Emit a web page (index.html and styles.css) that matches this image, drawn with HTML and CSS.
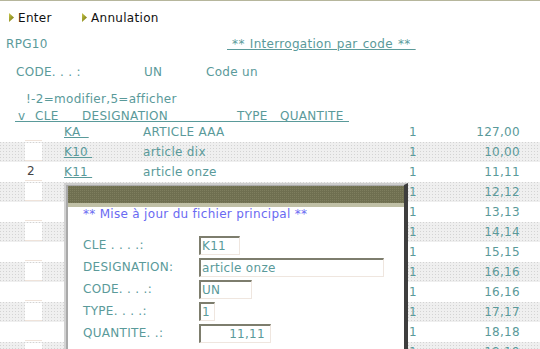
FILE: index.html
```html
<!DOCTYPE html>
<html lang="fr">
<head>
  <meta charset="UTF-8" />
  <title>RPG10 - Interrogation par code</title>
  <link rel="stylesheet" href="styles.css">
</head>
<body>
  <svg width="0" height="0" class="defs">
    <defs>
      <linearGradient id="fk" x1="0" y1="0" x2="1" y2="1">
        <stop offset="0" stop-color="#c8c84a"/>
        <stop offset="1" stop-color="#6f6f0c"/>
      </linearGradient>
    </defs>
  </svg>

  <div class="page">
    <div class="toolbar">
      <span class="fkey"><svg class="arrow" width="5" height="9"><polygon points="0,0 5,4.5 0,9" fill="url(#fk)"/></svg>Enter</span>
      <span class="fkey"><svg class="arrow" width="5" height="9"><polygon points="0,0 5,4.5 0,9" fill="url(#fk)"/></svg>Annulation</span>
    </div>

    <div class="line line-id">
      <span class="pgm">RPG10</span>
      <span class="title">&nbsp;** Interrogation par code **&nbsp;</span>
    </div>

    <div class="line line-code">
      <span class="lbl">CODE. . . :</span>
      <span class="val">UN</span>
      <span>Code un</span>
    </div>

    <div class="hint">!-2=modifier,5=afficher</div>

    <div class="cols-wrap">
      <div class="cols">
        <span class="h-v">v</span>
        <span class="h-cle">CLE</span>
        <span class="h-des">DESIGNATION</span>
        <span class="h-typ">TYPE</span>
        <span>QUANTITE</span>
      </div>
    </div>

    <!-- rows 4 and below sit under the update window, only TYPE / QUANTITE show -->
    <div class="list">
      <div class="row"><span class="sel"><span class="box"></span></span><span class="cle"><a href="#">KA&nbsp;&nbsp;</a></span><span class="des">ARTICLE AAA</span><span class="typ">1</span><span class="qty">127,00</span></div>
      <div class="row alt"><span class="sel"><span class="box"></span></span><span class="cle"><a href="#">K10&nbsp;</a></span><span class="des">article dix</span><span class="typ">1</span><span class="qty">10,00</span></div>
      <div class="row"><span class="sel"><span class="box">2</span></span><span class="cle"><a href="#">K11&nbsp;</a></span><span class="des">article onze</span><span class="typ">1</span><span class="qty">11,11</span></div>
      <div class="row alt"><span class="sel"><span class="box"></span></span><span class="cle"></span><span class="des"></span><span class="typ">1</span><span class="qty">12,12</span></div>
      <div class="row"><span class="sel"><span class="box"></span></span><span class="cle"></span><span class="des"></span><span class="typ">1</span><span class="qty">13,13</span></div>
      <div class="row alt"><span class="sel"><span class="box"></span></span><span class="cle"></span><span class="des"></span><span class="typ">1</span><span class="qty">14,14</span></div>
      <div class="row"><span class="sel"><span class="box"></span></span><span class="cle"></span><span class="des"></span><span class="typ">1</span><span class="qty">15,15</span></div>
      <div class="row alt"><span class="sel"><span class="box"></span></span><span class="cle"></span><span class="des"></span><span class="typ">1</span><span class="qty">16,16</span></div>
      <div class="row"><span class="sel"><span class="box"></span></span><span class="cle"></span><span class="des"></span><span class="typ">1</span><span class="qty">16,16</span></div>
      <div class="row alt"><span class="sel"><span class="box"></span></span><span class="cle"></span><span class="des"></span><span class="typ">1</span><span class="qty">17,17</span></div>
      <div class="row"><span class="sel"><span class="box"></span></span><span class="cle"></span><span class="des"></span><span class="typ">1</span><span class="qty">18,18</span></div>
      <div class="row alt"><span class="sel"><span class="box"></span></span><span class="cle"></span><span class="des"></span><span class="typ">1</span><span class="qty">19,19</span></div>
    </div>
  </div>

  <div class="dialog">
    <div class="dialog-in">
      <div class="dlg-bar"></div>
      <div class="dlg-body">
        <div class="dlg-title">** Mise à jour du fichier principal **</div>
        <div class="form">
          <label>CLE . . . .:</label>
          <input class="f-cle" value="K11" readonly>
          <label>DESIGNATION:</label>
          <input class="f-des" value="article onze" readonly>
          <label>CODE. . . .:</label>
          <input class="f-code" value="UN" readonly>
          <label>TYPE. . . .:</label>
          <input class="f-typ" value="1" readonly>
          <label>QUANTITE. .:</label>
          <input class="f-qty" value="11,11" readonly>
        </div>
      </div>
    </div>
  </div>
</body>
</html>
```

FILE: styles.css
```css
* {
  box-sizing: border-box;
  margin: 0;
  padding: 0;
}

body {
  font-family: "DejaVu Sans", Verdana, sans-serif;
  font-size: 12px;
  letter-spacing: 0.3px;
  color: #5a9a9a;
  background: #fff;
  position: relative;
  height: 349px;
  overflow: hidden;
}

.defs {
  position: absolute;
}

.page {
  border-top: 1px solid #b6b69c;
}

.toolbar {
  height: 33px;
  display: flex;
  align-items: center;
  padding-left: 9px;
  color: #111;
}

.fkey {
  display: inline-flex;
  align-items: center;
  gap: 4px;
}

.fkey:first-child {
  width: 73px;
}

.arrow {
  display: block;
}

.line {
  height: 20px;
  line-height: 20px;
  display: flex;
  white-space: pre;
}

.line-id .pgm {
  width: 227px;
  padding-left: 6px;
}

.title {
  text-decoration: underline;
  word-spacing: 1px;
}

.line-code {
  margin-top: 8px;
}

.line-code .lbl {
  width: 144px;
  padding-left: 16px;
}

.line-code .val {
  width: 62px;
}

.hint {
  margin-top: 10px;
  height: 14px;
  line-height: 14px;
  padding-left: 26px;
}

.cols-wrap {
  height: 16px;
  padding: 3px 0 0 15px;
}

.cols {
  display: inline-flex;
  line-height: 10px;
  border-bottom: 1px solid #5a9a9a;
  padding: 0 5px 0 3px;
}

.h-v { width: 17px; }
.h-cle { width: 47px; }
.h-des { width: 155px; }
.h-typ { width: 43px; }

.row {
  display: flex;
  height: 20px;
  line-height: 20px;
  white-space: pre;
}

.row.alt {
  background: conic-gradient(at 1px 1px, #efefef 75%, #d3d3d3 0) 0 0 / 3px 3px;
}

.sel {
  width: 64px;
  padding-left: 25px;
}

.sel .box {
  display: block;
  width: 17px;
  height: 18px;
  margin-top: 1px;
  background: #fff;
  border-bottom: 1px solid #efe3da;
  color: #444;
  padding-left: 2px;
  line-height: 17px;
}

.cle { width: 79px; }

.cle a {
  color: inherit;
}

.des { width: 266px; }
.typ { width: 60px; }

.qty {
  width: 51px;
  text-align: right;
}

.dialog {
  position: absolute;
  left: 64px;
  top: 183px;
  width: 344px;
  height: 175px;
  border-top: 2px solid #cdcdcd;
  border-left: 2px solid #d2d2d2;
  border-right: 4px solid #3e3e3e;
  background: #fff;
}

.dialog-in {
  height: 100%;
  border-top: 1px solid #a9a9a9;
  border-left: 2px solid #a9a9a9;
}

.dlg-bar {
  height: 21px;
  background: conic-gradient(at 1px 1px, #6f6f50 75%, #7e7e5e 0) 0 0 / 2px 2px;
  border-bottom: 4px solid #c0c0a6;
}

.dlg-body {
  padding-left: 15px;
}

.dlg-title {
  line-height: 14px;
  color: #6a6af2;
}

.form {
  margin-top: 15px;
  display: grid;
  grid-template-columns: 116px auto;
  row-gap: 3px;
  align-items: center;
}

.form label {
  line-height: 19px;
  white-space: pre;
}

.form input {
  height: 19px;
  font: inherit;
  letter-spacing: inherit;
  color: #5a9a9a;
  background: #fff;
  border-style: solid;
  border-width: 2px 1px 1px 2px;
  border-color: #7d7d6d #efe6df #efe6df #7d7d6d;
  padding: 0 1px;
  outline: none;
}

.f-cle { width: 41px; }
.f-des { width: 185px; }
.f-code { width: 53px; }
.f-typ { width: 16px; }

.f-qty {
  width: 72px;
  text-align: right;
  padding-right: 5px !important;
}
```
